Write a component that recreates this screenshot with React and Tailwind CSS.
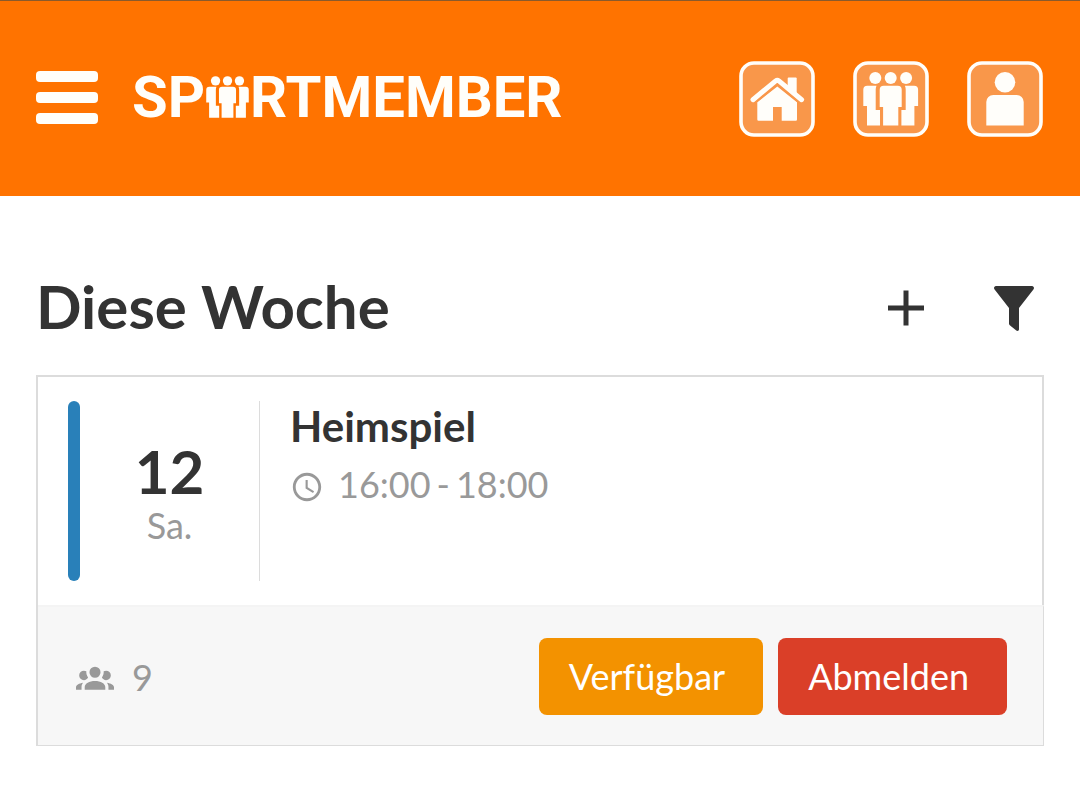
import { MdAccessTime } from "react-icons/md";

const PeopleShapes = () => (
  <g fill="currentColor">
    <circle cx="22.3" cy="17" r="6" />
    <circle cx="37.7" cy="17" r="6" />
    <circle cx="53.1" cy="17" r="6" />
    <path d="M30.7 24.7h14a4 4 0 0 1 4 4V46h-3.4v18.4H30.1V46h-3.4V28.7a4 4 0 0 1 4-4z" />
    <path d="M14.3 24.7h9.2c-.6 1.2-.8 2.6-.8 4V49H27v15.4H14V45h-3.7V28.7a4 4 0 0 1 4-4z" />
    <path d="M61.1 24.7h-9.2c.6 1.2.8 2.6.8 4V49h-4.3v15.4h13V45h3.7V28.7a4 4 0 0 0-4-4z" />
  </g>
);

const HomeShapes = () => (
  <>
    <path
      d="M38.3 25.6L58 41.2V58.5a1.200 1.200 0 0 1-1.200 1.200H42.700V46H34v13.700H19.500a1.200 1.200 0 0 1-1.200-1.200V41.200z"
      fill="currentColor"
    />
    <path d="M48.700 17.500a1 1 0 0 1 1-1h7a1 1 0 0 1 1 1V35l-9-7z" fill="currentColor" />
    <path
      d="M14 38.700L36.700 19.900q1.600-1.200 3.200 0L62.600 38.700"
      fill="none"
      stroke="currentColor"
      strokeWidth="5"
      strokeLinecap="round"
    />
    <path
      d="M15.500 42.300L38.300 23.700L61.100 42.300"
      fill="none"
      stroke="#f9974a"
      strokeWidth="1.500"
    />
  </>
);

const ProfileShapes = () => (
  <g fill="currentColor">
    <circle cx="38" cy="21.3" r="10.3" />
    <path d="M26.3 34h23.4a7 7 0 0 1 7 7v23.400H19.300V41a7 7 0 0 1 7-7z" />
  </g>
);

const navItems = [
  { label: "Startseite", Shapes: HomeShapes },
  { label: "Team", Shapes: PeopleShapes },
  { label: "Profil", Shapes: ProfileShapes },
];

function Header() {
  return (
    <header className="flex h-[196px] items-center justify-between border-t border-[#8a5a2c] bg-[#ff7300] pr-[37px] pl-9 text-[#fffefa]">
      <div className="flex items-center gap-[34px] pb-[3px]">
        <button aria-label="Menü" className="flex w-[62px] flex-col gap-[10px]">
          <span className="h-[11px] rounded-sm bg-current" />
          <span className="h-[11px] rounded-sm bg-current" />
          <span className="h-[11px] rounded-sm bg-current" />
        </button>
        <a
          href="#"
          aria-label="SportMember"
          className="flex items-center font-[Roboto,sans-serif] text-[58px] leading-none font-bold"
        >
          <span>SP</span>
          <svg viewBox="10 11 55.4 53.6" className="mx-px h-[42px] w-[43px]">
            <PeopleShapes />
          </svg>
          <span>RTMEMBER</span>
        </a>
      </div>
      <nav className="flex gap-[38px]">
        {navItems.map(({ label, Shapes }) => (
          <a key={label} href="#" aria-label={label}>
            <svg viewBox="0 0 76 76" className="size-[76px]">
              <rect
                x="2"
                y="2"
                width="72"
                height="72"
                rx="13"
                fill="#f9974a"
                stroke="currentColor"
                strokeWidth="3.6"
              />
              <Shapes />
            </svg>
          </a>
        ))}
      </nav>
    </header>
  );
}

function EventCard() {
  return (
    <article className="border-l-2 border-[#dcdcdc]">
      <div className="flex border-t-2 border-r-2 border-[#dcdcdc] px-[30px] py-6">
        <div className="w-3 rounded-full bg-[#2980b9]" />
        <div className="flex h-[180px] w-[180px] flex-col items-center justify-center border-r border-[#dcdcdc] pt-2">
          <span className="text-[60px] leading-[60px] font-bold">12</span>
          <span className="text-4xl leading-[48px] text-[#999]">Sa.</span>
        </div>
        <div className="pl-[30px]">
          <h2 className="text-[42px] leading-[50px] font-bold">Heimspiel</h2>
          <div className="mt-2 flex items-center gap-[14px] text-4xl leading-[50px] text-[#999]">
            <MdAccessTime className="mt-[6px] size-[34px]" />
            <p className="flex gap-[6px]">
              <time>16:00</time>
              <span>-</span>
              <time>18:00</time>
            </p>
          </div>
        </div>
      </div>
      <footer className="flex items-center justify-between border-t-2 border-r border-b border-t-[#f4f4f4] border-r-[#dcdcdc] border-b-[#dcdcdc] bg-[#f7f7f7] pt-[31px] pr-9 pb-[30px] pl-[38px]">
        <div className="flex items-center gap-[18px] text-4xl text-[#999]">
          <svg viewBox="0 0 24 24" fill="currentColor" className="size-[38px]">
            <path d="M12,5.5A3.5,3.5 0 0,1 15.5,9A3.5,3.5 0 0,1 12,12.5A3.5,3.5 0 0,1 8.5,9A3.5,3.5 0 0,1 12,5.5M5,8C5.56,8 6.08,8.15 6.53,8.42C6.38,9.85 6.8,11.27 7.66,12.38C7.16,13.34 6.16,14 5,14A3,3 0 0,1 2,11A3,3 0 0,1 5,8M19,8A3,3 0 0,1 22,11A3,3 0 0,1 19,14C17.84,14 16.84,13.34 16.34,12.38C17.2,11.27 17.62,9.85 17.47,8.42C17.92,8.15 18.44,8 19,8M5.5,18.25C5.5,16.18 8.41,14.5 12,14.5C15.59,14.5 18.5,16.18 18.5,18.25V20H5.5V18.25M0,20V18.5C0,17.11 1.89,15.94 4.45,15.6C3.86,16.28 3.5,17.22 3.5,18.25V20H0M24,20H20.5V18.25C20.5,17.22 20.14,16.28 19.55,15.6C22.11,15.94 24,17.11 24,18.5V20Z" />
          </svg>
          9
        </div>
        <div className="flex gap-[15px] text-4xl text-white">
          <button className="h-[77px] rounded-lg bg-[#f39200] pr-[38px] pb-[2px] pl-[30px]">
            Verfügbar
          </button>
          <button className="h-[77px] rounded-lg bg-[#da3f28] pr-[38px] pb-[2px] pl-[30px]">
            Abmelden
          </button>
        </div>
      </footer>
    </article>
  );
}

export default function App() {
  return (
    <div className="min-h-screen bg-white font-[Lato,sans-serif] text-[#333]">
      <Header />
      <main className="px-9">
        <div className="flex items-center justify-between pt-[74px] pb-[33px]">
          <h1 className="text-[60px] leading-[72px] font-bold">Diese Woche</h1>
          <div className="flex items-center gap-[70px] pt-1 pr-[10px]">
            <button aria-label="Hinzufügen">
              <svg viewBox="0 0 36 36" className="size-9">
                <path
                  d="M18 .5v35M0 18h36"
                  stroke="currentColor"
                  strokeWidth="5"
                />
              </svg>
            </button>
            <button aria-label="Filtern">
              <svg viewBox="0 0 40 45" className="h-[45px] w-10">
                <path
                  d="M2 0h36c1.800 0 2.600 2.200 1.400 3.600L25 22v21.300c0 1.500-1.500 2.100-2.700 1.200l-6.500-5.200c-.5-.4-.8-1-.8-1.700V22L.6 3.600C-.6 2.200.2 0 2 0z"
                  fill="currentColor"
                />
              </svg>
            </button>
          </div>
        </div>
        <EventCard />
      </main>
    </div>
  );
}
